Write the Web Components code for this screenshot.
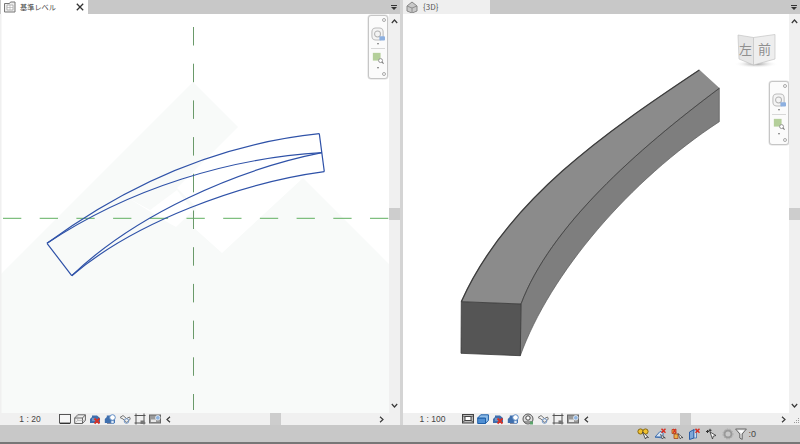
<!DOCTYPE html>
<html>
<head>
<meta charset="utf-8">
<title>views</title>
<style>
  html, body { margin: 0; height: 100%; background: #c8c8c8; overflow: hidden; }
</style>
</head>
<body>
<rvt-app>
  <rvt-view slot="left" scale="1 : 20" bar="detail wire sunoff shadow render crop hide" scroll-at="274">
    <rvt-tab slot="tab" icon="plan" label="基準レベル" active closable></rvt-tab>
    <rvt-plan slot="canvas"></rvt-plan>
  </rvt-view>
  <rvt-view slot="right" scale="1 : 100" bar="hidden shaded sunoff shadow render2 render crop hide" scroll-at="278">
    <rvt-tab slot="tab" icon="house" label="{3D}"></rvt-tab>
    <rvt-model slot="canvas"></rvt-model>
  </rvt-view>
  <rvt-status slot="status"></rvt-status>
</rvt-app>

<script>
// small hand drawn icons, all on a 12x12 box
const ICONS = {
  plan: '<path d="M.5 2.5h5l1-1.5h4.5v10H.5z" fill="#eee" stroke="#777"/><path d="M3 4h6v5H3z" fill="#fff" stroke="#999" stroke-width=".7"/><path d="M3 6.5h6M6 4v5" stroke="#aaa" stroke-width=".6"/>',
  house: '<path d="M1 5 6 1l5 4v5l-5 2-5-2z" fill="#c9c9c9" stroke="#888"/><path d="M1 5l5 2 5-2M6 7v5" stroke="#8e8e8e" fill="none"/>',
  detail: '<rect x=".5" y="1.5" width="11" height="8.5" fill="#f6f6f6" stroke="#555"/><path d="M1 10.5h10" stroke="#333"/>',
  wire: '<path d="M.7 5h7.8v5.5H.7zM.7 5l3-3.2h7.7v5.6l-2.9 3M8.5 5l2.9-3.2" fill="none" stroke="#666"/><path d="M3.7 2v5.4h7.6M.9 10.3l2.8-2.9" fill="none" stroke="#aaa" stroke-width=".7"/>',
  hidden: '<rect x=".5" y="1.5" width="11" height="8.5" fill="#bbb" stroke="#444"/><rect x="3" y="3.5" width="6" height="4" fill="#fff" stroke="#444"/><path d="M1 3l2 1M11 3 9 4M1 9l2-1.500M11 9 9 7.500" stroke="#444" stroke-width=".7"/>',
  shaded: '<path d="M.7 5h7.800v5.500H.7z" fill="#4f8fd3" stroke="#1f5fa8"/><path d="M.7 5l3-3.200h7.700v5.600l-2.900 3V5z" fill="#8fbde8" stroke="#1f5fa8"/>',
  sunoff: '<path d="M1 6l2-2V2.500h5L11 5v5H1z" fill="#3f6fae"/><path d="M3 5h4v3H3z" fill="#6f94c4"/><path d="M5.500 5.500l5 5m0-5-5 5" stroke="#d92f23" stroke-width="1.800"/>',
  shadow: '<path d="M.8 6l2-2V2.500h4L11 5v5H.8z" fill="#3f6fae"/><circle cx="8.500" cy="4.500" r="2.800" fill="#fff" stroke="#5f8cc4"/><path d="M3 10.500h7" stroke="#889" stroke-width="1"/><path d="M7 7.500h3v3H7z" fill="#dfe9f5" stroke="#5f8cc4" stroke-width=".7"/>',
  render: '<path d="M1 4.500 4 2.500l3.500 3 3-1.500.8 2-3.500 3.500L4 6z" fill="none" stroke="#777"/><circle cx="7.500" cy="8" r="2.300" fill="none" stroke="#6f94c4"/>',
  render2: '<circle cx="6" cy="6" r="5" fill="#ddd" stroke="#555"/><circle cx="6" cy="5" r="2.200" fill="#fff" stroke="#444"/><path d="M2 9h8" stroke="#555"/><path d="M8 8.500h3v3H8z" fill="#5aa36a"/>',
  crop: '<path d="M2 .5v11M10 .5v11M.5 2.500h11M.5 10h11" stroke="#555"/><path d="M6.500 7.500h4v3.500h-4z" fill="#777"/>',
  hide: '<rect x=".5" y="2" width="11" height="8" fill="#9a9a9a" stroke="#666"/><rect x="2" y="6.500" width="5" height="2.500" fill="#e8e8e8"/><circle cx="8.800" cy="4.800" r="2.300" fill="#8fb4e0" stroke="#fff" stroke-width=".7"/>',
  wsel: '<circle cx="3.500" cy="3.500" r="2.600" fill="#f2c230" stroke="#8a6a10"/><circle cx="8.500" cy="3.500" r="2.600" fill="#f2c230" stroke="#8a6a10"/><path d="M5.500 4l3 7 1-2 2 .5z" fill="#fff" stroke="#333" stroke-width=".8"/>',
  s2: '<path d="M1 9 6 3.500l3 1V10z" fill="#d6e4f4" stroke="#3f6fae"/><path d="M1 9h9" stroke="#3f6fae"/><path d="M7.500.8l4 4m0-4-4 4" stroke="#d92f23" stroke-width="1.500"/><path d="M6.500 6.500l2 4.500 1-1.500 1.800.5z" fill="#fff" stroke="#333" stroke-width=".7"/>',
  s3: '<path d="M1 1.500h4v4H1zM3 6h4v4.500H3z" fill="#e9b54a" stroke="#a8421c" stroke-width=".8"/><path d="M2 .8l3 4m0-4-3 4" stroke="#d92f23" stroke-width="1.200"/><path d="M7 5.500l2.300 5.500 1-1.700 1.700.5z" fill="#fff" stroke="#333" stroke-width=".7"/>',
  s4: '<path d="M1.500 4 6 1.500v8.500L1.500 11.500z" fill="#7fa7d8" stroke="#2d5fa6"/><path d="M6 2h2.500v8H6z" fill="#cfdff2" stroke="#2d5fa6" stroke-width=".7"/><path d="M7.500.8l4 4m0-4-4 4" stroke="#d92f23" stroke-width="1.500"/>',
  s5: '<path d="M1 3.500h3M2.500 2v3M5 .8v3M3.500 2.300h3" stroke="#333"/><path d="M5 4l6 3.500-2.700.6L7.500 11z" fill="#fff" stroke="#333" stroke-width=".8"/>',
  gear: '<circle cx="6" cy="6" r="3.500" fill="none" stroke="#999" stroke-width="2"/><circle cx="6" cy="6" r="5" fill="none" stroke="#aaa" stroke-width="1" stroke-dasharray="1.500 1.200"/>',
  funnel: '<path d="M.6 1h10.800L7.200 6v5.400L4.800 10V6z" fill="#e6e6e6" stroke="#666"/><path d="M3 2.500h6L6.500 5z" fill="#fff"/>',
  wheel: '<rect x="1" y="1" width="12" height="13" rx="4" fill="#f4f4f4" stroke="#bbb" stroke-width="1.100"/><circle cx="7" cy="7.500" r="3.200" fill="none" stroke="#b4b4b4" stroke-width="1.100"/><rect x="9" y="10" width="6" height="4.500" rx="1" fill="#8db0e0"/>',
  zoom: '<rect x="1" y="1" width="9" height="9" fill="#b4cf9a"/><circle cx="10" cy="10" r="2.300" fill="#fff" stroke="#888"/><path d="M11.500 11.500l2 2" stroke="#777" stroke-width="1.200"/>'
}

class RvtIcon extends HTMLElement {
  connectedCallback() {
    const size = this.getAttribute('size') || 12
    const box = this.getAttribute('box') || 12
    this.attachShadow({ mode: 'open' }).innerHTML = `
      <style>
        :host { display: block; width: ${size}px; height: ${size}px; flex: none; }
        svg { display: block; }
      </style>
      <svg width="${size}" height="${size}" viewBox="0 0 ${box} ${box}">${ICONS[this.getAttribute('name')]}</svg>`
  }
}

// chevron for the scroll bars, dir = up/down/left/right
class RvtArrow extends HTMLElement {
  connectedCallback() {
    const turn = { up: 0, right: 90, down: 180, left: 270 }[this.getAttribute('dir')]
    this.attachShadow({ mode: 'open' }).innerHTML = `
      <style>
        :host { display: block; width: 7px; height: 7px; flex: none; }
        svg { display: block; transform: rotate(${turn}deg); }
      </style>
      <svg width="7" height="7" viewBox="0 0 7 7"><path d="M.8 5 3.500 2 6.200 5" fill="none" stroke="#3a3a3a" stroke-width="1.200"/></svg>`
  }
}

class RvtTab extends HTMLElement {
  connectedCallback() {
    const closable = this.hasAttribute('closable')
    this.attachShadow({ mode: 'open' }).innerHTML = `
      <style>
        :host {
          display: flex; align-items: center; box-sizing: border-box;
          width: 87px; height: 14px; padding-left: 3px; gap: 5px;
          background: #efefef; color: #555;
          font: 8px "Noto Sans CJK JP", "Liberation Sans", sans-serif;
        }
        :host([active]) { background: #fff; margin-left: 1px; gap: 4px; color: #444; font-size: 7.200px; }
        span { flex: 1; white-space: nowrap; line-height: 14px; }
        svg { margin-right: 4px; }
      </style>
      <rvt-icon name="${this.getAttribute('icon')}"></rvt-icon>
      <span>${this.getAttribute('label')}</span>
      ${closable ? '<svg width="8" height="8" viewBox="0 0 8 8"><path d="M.8.800l6.400 6.400m0-6.400-6.400 6.400" stroke="#333" stroke-width="1.300"/></svg>' : ''}`
  }
}

class RvtNavbar extends HTMLElement {
  connectedCallback() {
    this.attachShadow({ mode: 'open' }).innerHTML = `
      <style>
        :host {
          display: flex; flex-direction: column; align-items: center;
          box-sizing: border-box; width: 20px; height: 64px; padding: 2px 0;
          background: #fbfbfb; border: 1px solid #c6c6c6; border-radius: 3px;
          box-shadow: 0 0 0 .5px #ddd;
        }
        .dot { width: 2px; height: 2px; border: 1px solid #aaa; border-radius: 50%; align-self: flex-end; margin-right: 1px; }
        .drop { width: 0; height: 0; border: 1.500px solid transparent; border-top: 2px solid #777; margin: 2px 0 2px; }
        .wheel { margin-top: 5px; }
        .after { margin-top: 3px; }
        hr { width: 14px; margin: 0 0 3px; border: 0; border-top: 1px solid #d8d8d8; }
        .end { margin-top: auto; }
      </style>
      <div class="dot"></div>
      <rvt-icon class="wheel" name="wheel" size="14" box="15"></rvt-icon>
      <div class="drop"></div>
      <hr>
      <rvt-icon name="zoom" size="12" box="14"></rvt-icon>
      <div class="drop after"></div>
      <div class="dot end"></div>`
  }
}

class RvtCube extends HTMLElement {
  connectedCallback() {
    this.attachShadow({ mode: 'open' }).innerHTML = `
      <style>
        :host { display: block; width: 46px; height: 40px; }
        svg { display: block; }
        text { font: 13px "Noto Sans CJK JP", sans-serif; fill: #8f8f8f; text-anchor: middle; }
      </style>
      <svg width="46" height="40" viewBox="734 30 46 40">
        <defs>
          <radialGradient id="sh"><stop offset="0" stop-color="#9a9a9a"/><stop offset="1" stop-color="#fff" stop-opacity="0"/></radialGradient>
        </defs>
        <ellipse cx="757" cy="64" rx="22" ry="4" fill="url(#sh)"/>
        <path d="M739 35 754.500 37.500 754.500 65 740 59z" fill="#e6e6e6" stroke="#c4c4c4" stroke-width=".7"/>
        <path d="M754.500 37.500 776 34.500 776 59 754.500 65z" fill="#eeeeee" stroke="#c4c4c4" stroke-width=".7"/>
        <text x="746.500" y="54">左</text>
        <text x="765.500" y="54">前</text>
      </svg>`
  }
}

class RvtPlan extends HTMLElement {
  connectedCallback() {
    this.attachShadow({ mode: 'open' }).innerHTML = `
      <style>
        :host { display: block; width: 100%; height: 100%; background: #fff; }
        svg { display: block; }
      </style>
      <svg width="389" height="399" viewBox="0 14 389 399">
        <path d="M0 275 193 82 238 127 177 188 196 207 193 227 222 253 303 178 389 264V413H0z" fill="#f8faf9"/>
        <path d="M128 198 167 222 176 227 193 211 177 190 150 210z" fill="#fff"/>
        <path d="M0 14H1.500V413H0z" fill="#f0f0f0"/>
        <path d="M3 218.300H389" stroke="#5fb05f" stroke-dasharray="18.300 18.400"/>
        <path d="M193.500 27V410" stroke="#6a9a6a" stroke-dasharray="18.500 18.200"/>
        <g fill="none" stroke="#2f52a8" stroke-width="1.200">
          <path d="M47 243.300C140 175 230 143 319.300 133.700"/>
          <path d="M47 243.300C130 188 230 158 322 152.700"/>
          <path d="M71.700 275.700C135 215 235 170 322 152.700"/>
          <path d="M71.700 275.700C135 222 240 183 324.300 171.700"/>
          <path d="M47 243.300 71.700 275.700M319.300 133.700 324.300 171.700"/>
        </g>
      </svg>`
  }
}

class RvtModel extends HTMLElement {
  connectedCallback() {
    const top = 'M461.300 301.700C506.700 200 606.700 131.700 699.300 70'
    const ridge = 'M521 304C550 226.700 636.700 150 719.300 88.300'
    this.attachShadow({ mode: 'open' }).innerHTML = `
      <style>
        :host { display: block; width: 100%; height: 100%; background: #fff; }
        svg { display: block; }
      </style>
      <svg width="387" height="399" viewBox="403 14 387 399">
        <path d="${top}L719.300 88.300C636.700 150 550 226.700 521 304z" fill="#8b8b8b" stroke="#777" stroke-width=".5"/>
        <path d="${ridge}V121.700C630 180 550 273.300 520.300 355.700z" fill="#7e7e7e" stroke="#5a5a5a" stroke-width=".7"/>
        <path d="${ridge}" fill="none" stroke="#3a3a3a" stroke-width=".7"/>
        <path d="${top}" fill="none" stroke="#3c3c3c" stroke-width="1.300"/>
        <path d="M461.300 301.700 521 304 520.300 355.700 461 353.300z" fill="#555" stroke="#3a3a3a" stroke-width=".8"/>
      </svg>`
  }
}

class RvtView extends HTMLElement {
  connectedCallback() {
    const icons = this.getAttribute('bar').split(' ').map(n => `<rvt-icon name="${n}"></rvt-icon>`).join('')
    const side = this.getAttribute('slot') === 'left'
    this.attachShadow({ mode: 'open' }).innerHTML = `
      <style>
        :host {
          display: grid; grid-template-columns: 1fr 11px; grid-template-rows: 14px 1fr 12px;
          min-width: 0; height: 425px;
        }
        .tabs { grid-column: 1 / 3; display: flex; align-items: center; justify-content: space-between; background: #c8c8c8; }
        .menu { display: flex; flex-direction: column; gap: 1px; margin-right: 3px; align-items: center; }
        .menu i { display: block; width: 6px; height: 1px; background: #333; }
        .menu b { display: block; width: 0; height: 0; border: 3px solid transparent; border-top: 3px solid #333; border-bottom: 0; }
        .canvas { position: relative; min-height: 0; overflow: hidden; }
        rvt-navbar { position: absolute; top: ${side ? 1 : 67}px; right: ${side ? 1 : 0}px; }
        .extra { position: absolute; top: 16px; right: 10px; }
        .vscroll { background: #f0f0f0; display: flex; flex-direction: column; align-items: center; justify-content: space-between; padding: 4px 0; }
        .vthumb { width: 100%; height: 12px; background: #cdcdcd; }
        .bar {
          position: relative;
          grid-column: 1 / 3; display: flex; align-items: center; background: #f0f0f0; padding-right: 1px;
          font: 8.500px "Liberation Sans", sans-serif; color: #444;
        }
        .scale { width: 59px; text-align: center; flex: none; white-space: pre; padding-left: ${side ? 1 : 0}px; box-sizing: border-box; }
        .icons { display: flex; gap: 3px; }
        .track { flex: 1; display: flex; align-items: center; justify-content: space-between; margin-left: 4px; padding-right: ${side ? 14 : 12}px; height: 100%; }
        .hthumb { width: 11px; height: 100%; background: #cdcdcd; margin-left: ${this.getAttribute('scroll-at') - (side ? 171 : 175) - 103}px; }
        .grip { position: absolute; right: 0; bottom: 1px; }
      </style>
      <div class="tabs">
        <slot name="tab"></slot>
        <div class="menu"><i></i><b></b></div>
      </div>
      <div class="canvas">
        <slot name="canvas"></slot>
        ${side ? '' : '<rvt-cube class="extra"></rvt-cube>'}
        <rvt-navbar></rvt-navbar>
      </div>
      <div class="vscroll">
        <rvt-arrow dir="up"></rvt-arrow>
        <div class="vthumb"></div>
        <rvt-arrow dir="down"></rvt-arrow>
      </div>
      <div class="bar">
        <div class="scale">${this.getAttribute('scale')}</div>
        <div class="icons">${icons}</div>
        <div class="track">
          <rvt-arrow dir="left"></rvt-arrow>
          <div class="hthumb"></div>
          <rvt-arrow dir="right"></rvt-arrow>
        </div>
        ${side ? '' : '<svg class="grip" width="7" height="7" viewBox="0 0 7 7"><path d="M5 1h1v1H5zM3 3h1v1H3zM5 3h1v1H5zM1 5h1v1H1zM3 5h1v1H3zM5 5h1v1H5z" fill="#999"/></svg>'}
      </div>`
  }
}

class RvtStatus extends HTMLElement {
  connectedCallback() {
    this.attachShadow({ mode: 'open' }).innerHTML = `
      <style>
        :host {
          display: flex; align-items: center; justify-content: flex-end; gap: 5px;
          height: 17px; padding-right: 44px; background: #c8c8c8; border-bottom: 2px solid #777;
          font: 9px "Liberation Sans", sans-serif; color: #444;
        }
        .filter { display: flex; align-items: center; margin-left: -4px; }
        .filter rvt-icon { margin-right: 1px; }
      </style>
      <rvt-icon name="wsel"></rvt-icon>
      <rvt-icon name="s2"></rvt-icon>
      <rvt-icon name="s3"></rvt-icon>
      <rvt-icon name="s4"></rvt-icon>
      <rvt-icon name="s5"></rvt-icon>
      <rvt-icon name="gear"></rvt-icon>
      <div class="filter"><rvt-icon name="funnel"></rvt-icon>:0</div>`
  }
}

class RvtApp extends HTMLElement {
  connectedCallback() {
    this.attachShadow({ mode: 'open' }).innerHTML = `
      <style>
        :host { display: block; width: 800px; height: 444px; overflow: hidden; background: #c8c8c8; }
        .views { display: grid; grid-template-columns: 400px 397px; column-gap: 3px; background: #d4d4d4; }
      </style>
      <div class="views">
        <slot name="left"></slot>
        <slot name="right"></slot>
      </div>
      <slot name="status"></slot>`
  }
}

customElements.define('rvt-icon', RvtIcon)
customElements.define('rvt-arrow', RvtArrow)
customElements.define('rvt-tab', RvtTab)
customElements.define('rvt-navbar', RvtNavbar)
customElements.define('rvt-cube', RvtCube)
customElements.define('rvt-plan', RvtPlan)
customElements.define('rvt-model', RvtModel)
customElements.define('rvt-view', RvtView)
customElements.define('rvt-status', RvtStatus)
customElements.define('rvt-app', RvtApp)
</script>
</body>
</html>
